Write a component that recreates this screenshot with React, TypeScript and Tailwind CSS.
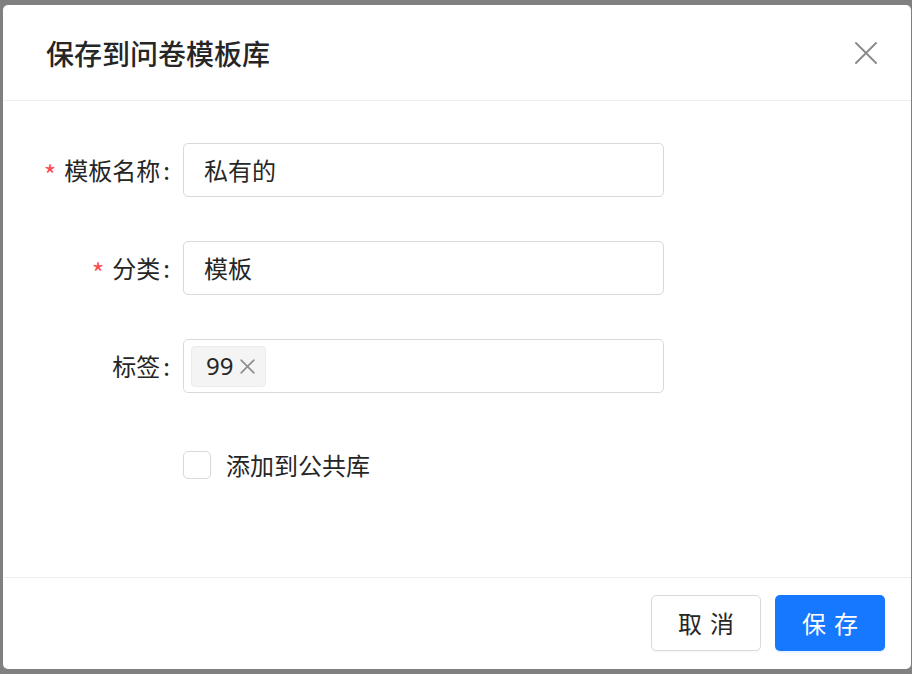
import { useState } from "react";

const FONT = {
  fontFamily: '"Noto Sans CJK SC", "Noto Sans", sans-serif',
};

function Label({ text, required }: { text: string; required?: boolean }) {
  return (
    <div className="flex w-[170px] shrink-0 items-center justify-end pr-[3px] text-[24px] text-[#262626]">
      {required && (
        <span className="mr-[8px] translate-y-[4px] text-[27px] leading-none text-[#ff4d4f]">*</span>
      )}
      <span>{text}</span>
      <span className="ml-[3px]">:</span>
    </div>
  );
}

export default function App() {
  const [checked, setChecked] = useState(false);

  return (
    <div
      className="h-[674px] w-[912px] overflow-hidden bg-[#808080] pl-[3px] pt-[5px]"
      style={FONT}
    >
      <div className="flex h-[664px] w-[908px] flex-col rounded-[5px] bg-white">
        {/* header */}
        <div className="flex h-[96px] shrink-0 items-center justify-between border-b border-[#efefef] pl-[43px] pr-[34px]">
          <div className="text-[28px] font-medium text-[#262626]">保存到问卷模板库</div>
          <button
            type="button"
            className="flex size-[22px] items-center justify-center text-[#8a8a8a]"
            aria-label="关闭"
          >
            <svg viewBox="0 0 22 22" className="size-[22px]" fill="none" stroke="currentColor" strokeWidth="1.9" strokeLinecap="round">
              <path d="M1 1 L21 21 M21 1 L1 21" />
            </svg>
          </button>
        </div>

        {/* body */}
        <div className="flex flex-1 flex-col gap-[44px] pt-[42px]">
          <div className="flex items-center gap-[10px]">
            <Label text="模板名称" required />
            <div className="flex h-[54px] w-[481px] items-center rounded-[5px] border border-[#d9d9d9] px-[20px] text-[24px] text-[#262626]">
              私有的
            </div>
          </div>

          <div className="flex items-center gap-[10px]">
            <Label text="分类" required />
            <div className="flex h-[54px] w-[481px] items-center rounded-[5px] border border-[#d9d9d9] px-[20px] text-[24px] text-[#262626]">
              模板
            </div>
          </div>

          <div className="flex items-center gap-[10px]">
            <Label text="标签" />
            <div className="flex h-[54px] w-[481px] items-center rounded-[5px] border border-[#d9d9d9] px-[7px]">
              <div className="flex h-[41px] items-center gap-[6px] rounded-[4px] border border-[#ebebeb] bg-[#f4f4f4] pl-[14px] pr-[9px] text-[24px] text-[#262626]">
                <span style={{ fontFamily: '"Noto Sans", sans-serif' }}>99</span>
                <svg viewBox="0 0 24 24" className="size-[17px] text-[#8c8c8c]" fill="none" stroke="currentColor" strokeWidth="2.2" strokeLinecap="round">
                  <path d="M3 3 L21 21 M21 3 L3 21" />
                </svg>
              </div>
            </div>
          </div>

          <div className="mt-[10px] flex items-center pl-[180px]">
            <button
              type="button"
              onClick={() => setChecked(!checked)}
              className="size-[28px] rounded-[5px] border border-[#d9d9d9] bg-white"
              aria-pressed={checked}
            />
            <span className="ml-[15px] text-[24px] text-[#262626]">添加到公共库</span>
          </div>
        </div>

        {/* footer */}
        <div className="flex h-[92px] shrink-0 items-start justify-end gap-[14px] border-t border-[#efefef] pr-[26px] pt-[17px]">
          <button
            type="button"
            className="h-[56px] w-[110px] rounded-[5px] border border-[#d9d9d9] bg-white text-[24px] tracking-[8px] text-[#262626] shadow-[0_2px_0_rgba(0,0,0,0.02)]"
          >
            <span className="ml-[8px]">取消</span>
          </button>
          <button
            type="button"
            className="h-[56px] w-[110px] rounded-[5px] bg-[#1677ff] text-[24px] tracking-[8px] text-white shadow-[0_2px_0_rgba(5,145,255,0.1)]"
          >
            <span className="ml-[8px]">保存</span>
          </button>
        </div>
      </div>
    </div>
  );
}
